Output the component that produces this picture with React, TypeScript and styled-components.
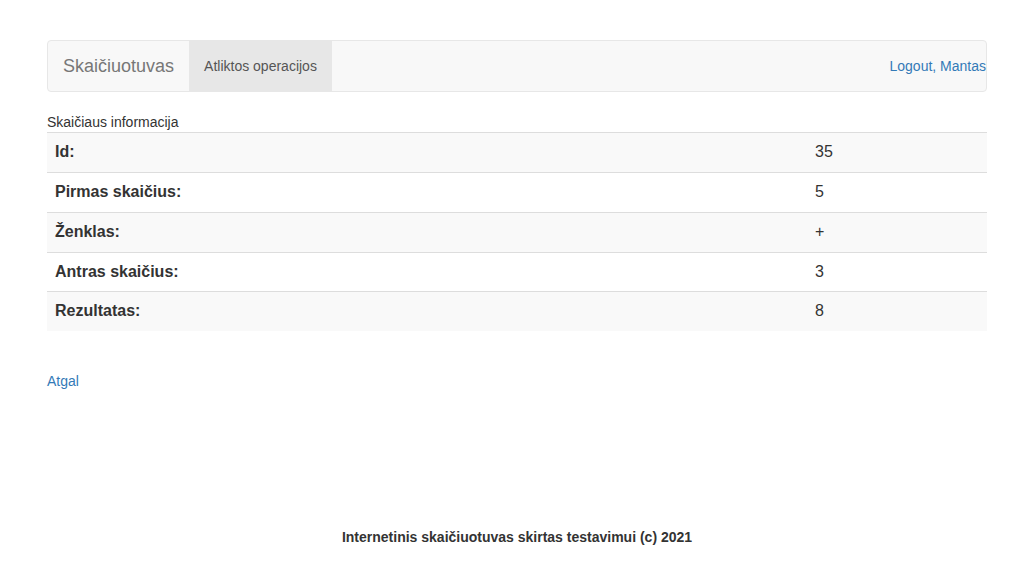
import React from 'react';
import styled, { createGlobalStyle } from 'styled-components';

const GlobalStyle = createGlobalStyle`
  html, body {
    margin: 0;
    padding: 0;
    background: #fff;
  }

  body {
    font-family: "Liberation Sans", Arial, Helvetica, sans-serif;
    font-size: 14px;
    line-height: 1.42857;
    color: #333;
  }
`;

const rows: [string, string][] = [
  ['Id:', '35'],
  ['Pirmas skaičius:', '5'],
  ['Ženklas:', '+'],
  ['Antras skaičius:', '3'],
  ['Rezultatas:', '8'],
];

const Page = styled.div`
  padding-top: 40px;
`;

const Container = styled.div`
  width: 940px;
  margin: 0 auto;
`;

const Navbar = styled.nav`
  display: flex;
  align-items: stretch;
  min-height: 50px;
  background: #f8f8f8;
  border: 1px solid #e7e7e7;
  border-radius: 4px;
  margin-bottom: 20px;
`;

const Brand = styled.a`
  padding: 15px;
  font-size: 18px;
  line-height: 20px;
  color: #777;
  text-decoration: none;
`;

const NavLink = styled.a<{ $active?: boolean }>`
  padding: 15px;
  line-height: 20px;
  color: #555;
  text-decoration: none;
  background: ${({ $active }) => ($active ? '#e7e7e7' : 'transparent')};
`;

const NavRight = styled.a`
  margin-left: auto;
  padding: 15px 0 15px 15px;
  line-height: 20px;
  color: #337ab7;
  text-decoration: none;
`;

const Table = styled.table`
  width: 100%;
  border-collapse: collapse;
  border-spacing: 0;
  margin-bottom: 40px;
`;

const Caption = styled.caption`
  text-align: left;
  color: #333;
  line-height: 20px;
`;

const Row = styled.tr`
  &:nth-child(odd) {
    background: #f9f9f9;
  }
`;

const Cell = styled.td<{ $label?: boolean }>`
  padding: 8px;
  font-size: 16px;
  line-height: 1.42857;
  border-top: 1px solid #ddd;
  font-weight: ${({ $label }) => ($label ? 'bold' : 'normal')};
  width: ${({ $label }) => ($label ? '744px' : 'auto')};
`;

const BackLink = styled.a`
  color: #337ab7;
  text-decoration: none;
  line-height: 20px;
`;

const Footer = styled.footer`
  margin-top: 135px;
  text-align: center;
  font-weight: bold;
  line-height: 20px;
`;

const App = () => {
  return (
    <Page>
      <GlobalStyle />
      <Container>
        <Navbar>
          <Brand href="#">Skaičiuotuvas</Brand>
          <NavLink href="#" $active>
            Atliktos operacijos
          </NavLink>
          <NavRight href="#">Logout, Mantas</NavRight>
        </Navbar>

        <Table>
          <Caption>Skaičiaus informacija</Caption>
          <tbody>
            {rows.map(([label, value]) => (
              <Row key={label}>
                <Cell $label>{label}</Cell>
                <Cell>{value}</Cell>
              </Row>
            ))}
          </tbody>
        </Table>

        <BackLink href="#">Atgal</BackLink>
      </Container>
      <Footer>Internetinis skaičiuotuvas skirtas testavimui (c) 2021</Footer>
    </Page>
  );
};

export default App;
